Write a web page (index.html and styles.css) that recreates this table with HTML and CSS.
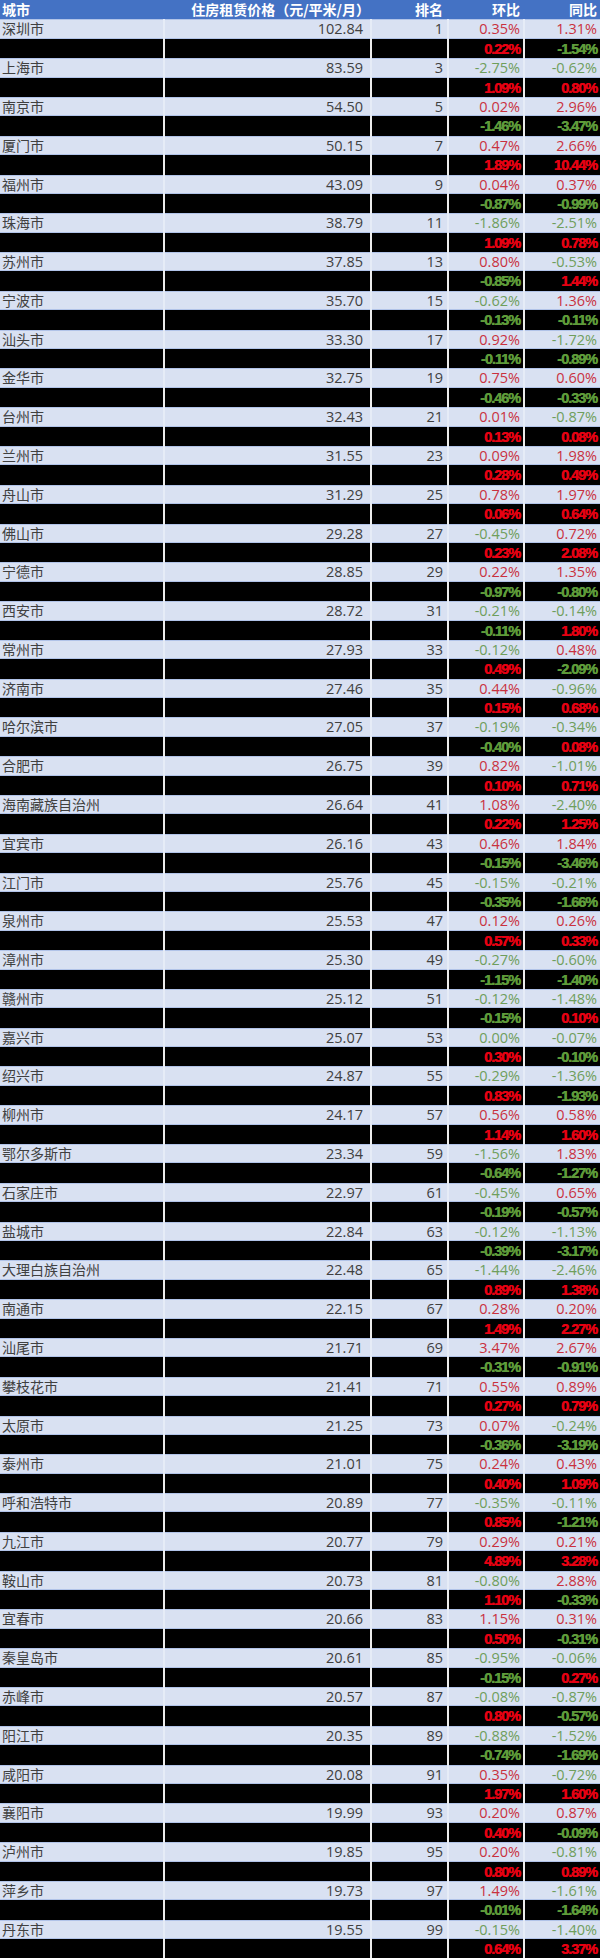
FILE: index.html
```html
<!DOCTYPE html>
<html lang="zh-CN">
<head>
<meta charset="utf-8">
<title>住房租赁价格</title>
<link rel="stylesheet" href="styles.css">
</head>
<body>
<div class="table">
<div class="row head"><div class="cell city">城市</div><div class="cell price">住房租赁价格（元/平米/月）</div><div class="cell rank">排名</div><div class="cell pct">环比</div><div class="cell pct">同比</div></div>
<div class="row data"><div class="cell city">深圳市</div><div class="cell price">102.84</div><div class="cell rank">1</div><div class="cell pct r">0.35%</div><div class="cell pct r">1.31%</div></div>
<div class="row mask"><div class="cell"></div><div class="cell"></div><div class="cell"></div><div class="cell pct r">0.22%</div><div class="cell pct g">-1.54%</div></div>
<div class="row data"><div class="cell city">上海市</div><div class="cell price">83.59</div><div class="cell rank">3</div><div class="cell pct g">-2.75%</div><div class="cell pct g">-0.62%</div></div>
<div class="row mask"><div class="cell"></div><div class="cell"></div><div class="cell"></div><div class="cell pct r">1.09%</div><div class="cell pct r">0.80%</div></div>
<div class="row data"><div class="cell city">南京市</div><div class="cell price">54.50</div><div class="cell rank">5</div><div class="cell pct r">0.02%</div><div class="cell pct r">2.96%</div></div>
<div class="row mask"><div class="cell"></div><div class="cell"></div><div class="cell"></div><div class="cell pct g">-1.46%</div><div class="cell pct g">-3.47%</div></div>
<div class="row data"><div class="cell city">厦门市</div><div class="cell price">50.15</div><div class="cell rank">7</div><div class="cell pct r">0.47%</div><div class="cell pct r">2.66%</div></div>
<div class="row mask"><div class="cell"></div><div class="cell"></div><div class="cell"></div><div class="cell pct r">1.89%</div><div class="cell pct r">10.44%</div></div>
<div class="row data"><div class="cell city">福州市</div><div class="cell price">43.09</div><div class="cell rank">9</div><div class="cell pct r">0.04%</div><div class="cell pct r">0.37%</div></div>
<div class="row mask"><div class="cell"></div><div class="cell"></div><div class="cell"></div><div class="cell pct g">-0.87%</div><div class="cell pct g">-0.99%</div></div>
<div class="row data"><div class="cell city">珠海市</div><div class="cell price">38.79</div><div class="cell rank">11</div><div class="cell pct g">-1.86%</div><div class="cell pct g">-2.51%</div></div>
<div class="row mask"><div class="cell"></div><div class="cell"></div><div class="cell"></div><div class="cell pct r">1.09%</div><div class="cell pct r">0.78%</div></div>
<div class="row data"><div class="cell city">苏州市</div><div class="cell price">37.85</div><div class="cell rank">13</div><div class="cell pct r">0.80%</div><div class="cell pct g">-0.53%</div></div>
<div class="row mask"><div class="cell"></div><div class="cell"></div><div class="cell"></div><div class="cell pct g">-0.85%</div><div class="cell pct r">1.44%</div></div>
<div class="row data"><div class="cell city">宁波市</div><div class="cell price">35.70</div><div class="cell rank">15</div><div class="cell pct g">-0.62%</div><div class="cell pct r">1.36%</div></div>
<div class="row mask"><div class="cell"></div><div class="cell"></div><div class="cell"></div><div class="cell pct g">-0.13%</div><div class="cell pct g">-0.11%</div></div>
<div class="row data"><div class="cell city">汕头市</div><div class="cell price">33.30</div><div class="cell rank">17</div><div class="cell pct r">0.92%</div><div class="cell pct g">-1.72%</div></div>
<div class="row mask"><div class="cell"></div><div class="cell"></div><div class="cell"></div><div class="cell pct g">-0.11%</div><div class="cell pct g">-0.89%</div></div>
<div class="row data"><div class="cell city">金华市</div><div class="cell price">32.75</div><div class="cell rank">19</div><div class="cell pct r">0.75%</div><div class="cell pct r">0.60%</div></div>
<div class="row mask"><div class="cell"></div><div class="cell"></div><div class="cell"></div><div class="cell pct g">-0.46%</div><div class="cell pct g">-0.33%</div></div>
<div class="row data"><div class="cell city">台州市</div><div class="cell price">32.43</div><div class="cell rank">21</div><div class="cell pct r">0.01%</div><div class="cell pct g">-0.87%</div></div>
<div class="row mask"><div class="cell"></div><div class="cell"></div><div class="cell"></div><div class="cell pct r">0.13%</div><div class="cell pct r">0.08%</div></div>
<div class="row data"><div class="cell city">兰州市</div><div class="cell price">31.55</div><div class="cell rank">23</div><div class="cell pct r">0.09%</div><div class="cell pct r">1.98%</div></div>
<div class="row mask"><div class="cell"></div><div class="cell"></div><div class="cell"></div><div class="cell pct r">0.28%</div><div class="cell pct r">0.49%</div></div>
<div class="row data"><div class="cell city">舟山市</div><div class="cell price">31.29</div><div class="cell rank">25</div><div class="cell pct r">0.78%</div><div class="cell pct r">1.97%</div></div>
<div class="row mask"><div class="cell"></div><div class="cell"></div><div class="cell"></div><div class="cell pct r">0.06%</div><div class="cell pct r">0.64%</div></div>
<div class="row data"><div class="cell city">佛山市</div><div class="cell price">29.28</div><div class="cell rank">27</div><div class="cell pct g">-0.45%</div><div class="cell pct r">0.72%</div></div>
<div class="row mask"><div class="cell"></div><div class="cell"></div><div class="cell"></div><div class="cell pct r">0.23%</div><div class="cell pct r">2.08%</div></div>
<div class="row data"><div class="cell city">宁德市</div><div class="cell price">28.85</div><div class="cell rank">29</div><div class="cell pct r">0.22%</div><div class="cell pct r">1.35%</div></div>
<div class="row mask"><div class="cell"></div><div class="cell"></div><div class="cell"></div><div class="cell pct g">-0.97%</div><div class="cell pct g">-0.80%</div></div>
<div class="row data"><div class="cell city">西安市</div><div class="cell price">28.72</div><div class="cell rank">31</div><div class="cell pct g">-0.21%</div><div class="cell pct g">-0.14%</div></div>
<div class="row mask"><div class="cell"></div><div class="cell"></div><div class="cell"></div><div class="cell pct g">-0.11%</div><div class="cell pct r">1.80%</div></div>
<div class="row data"><div class="cell city">常州市</div><div class="cell price">27.93</div><div class="cell rank">33</div><div class="cell pct g">-0.12%</div><div class="cell pct r">0.48%</div></div>
<div class="row mask"><div class="cell"></div><div class="cell"></div><div class="cell"></div><div class="cell pct r">0.49%</div><div class="cell pct g">-2.09%</div></div>
<div class="row data"><div class="cell city">济南市</div><div class="cell price">27.46</div><div class="cell rank">35</div><div class="cell pct r">0.44%</div><div class="cell pct g">-0.96%</div></div>
<div class="row mask"><div class="cell"></div><div class="cell"></div><div class="cell"></div><div class="cell pct r">0.15%</div><div class="cell pct r">0.68%</div></div>
<div class="row data"><div class="cell city">哈尔滨市</div><div class="cell price">27.05</div><div class="cell rank">37</div><div class="cell pct g">-0.19%</div><div class="cell pct g">-0.34%</div></div>
<div class="row mask"><div class="cell"></div><div class="cell"></div><div class="cell"></div><div class="cell pct g">-0.40%</div><div class="cell pct r">0.08%</div></div>
<div class="row data"><div class="cell city">合肥市</div><div class="cell price">26.75</div><div class="cell rank">39</div><div class="cell pct r">0.82%</div><div class="cell pct g">-1.01%</div></div>
<div class="row mask"><div class="cell"></div><div class="cell"></div><div class="cell"></div><div class="cell pct r">0.10%</div><div class="cell pct r">0.71%</div></div>
<div class="row data"><div class="cell city">海南藏族自治州</div><div class="cell price">26.64</div><div class="cell rank">41</div><div class="cell pct r">1.08%</div><div class="cell pct g">-2.40%</div></div>
<div class="row mask"><div class="cell"></div><div class="cell"></div><div class="cell"></div><div class="cell pct r">0.22%</div><div class="cell pct r">1.25%</div></div>
<div class="row data"><div class="cell city">宜宾市</div><div class="cell price">26.16</div><div class="cell rank">43</div><div class="cell pct r">0.46%</div><div class="cell pct r">1.84%</div></div>
<div class="row mask"><div class="cell"></div><div class="cell"></div><div class="cell"></div><div class="cell pct g">-0.15%</div><div class="cell pct g">-3.46%</div></div>
<div class="row data"><div class="cell city">江门市</div><div class="cell price">25.76</div><div class="cell rank">45</div><div class="cell pct g">-0.15%</div><div class="cell pct g">-0.21%</div></div>
<div class="row mask"><div class="cell"></div><div class="cell"></div><div class="cell"></div><div class="cell pct g">-0.35%</div><div class="cell pct g">-1.66%</div></div>
<div class="row data"><div class="cell city">泉州市</div><div class="cell price">25.53</div><div class="cell rank">47</div><div class="cell pct r">0.12%</div><div class="cell pct r">0.26%</div></div>
<div class="row mask"><div class="cell"></div><div class="cell"></div><div class="cell"></div><div class="cell pct r">0.57%</div><div class="cell pct r">0.33%</div></div>
<div class="row data"><div class="cell city">漳州市</div><div class="cell price">25.30</div><div class="cell rank">49</div><div class="cell pct g">-0.27%</div><div class="cell pct g">-0.60%</div></div>
<div class="row mask"><div class="cell"></div><div class="cell"></div><div class="cell"></div><div class="cell pct g">-1.15%</div><div class="cell pct g">-1.40%</div></div>
<div class="row data"><div class="cell city">赣州市</div><div class="cell price">25.12</div><div class="cell rank">51</div><div class="cell pct g">-0.12%</div><div class="cell pct g">-1.48%</div></div>
<div class="row mask"><div class="cell"></div><div class="cell"></div><div class="cell"></div><div class="cell pct g">-0.15%</div><div class="cell pct r">0.10%</div></div>
<div class="row data"><div class="cell city">嘉兴市</div><div class="cell price">25.07</div><div class="cell rank">53</div><div class="cell pct g">0.00%</div><div class="cell pct g">-0.07%</div></div>
<div class="row mask"><div class="cell"></div><div class="cell"></div><div class="cell"></div><div class="cell pct r">0.30%</div><div class="cell pct g">-0.10%</div></div>
<div class="row data"><div class="cell city">绍兴市</div><div class="cell price">24.87</div><div class="cell rank">55</div><div class="cell pct g">-0.29%</div><div class="cell pct g">-1.36%</div></div>
<div class="row mask"><div class="cell"></div><div class="cell"></div><div class="cell"></div><div class="cell pct r">0.83%</div><div class="cell pct g">-1.93%</div></div>
<div class="row data"><div class="cell city">柳州市</div><div class="cell price">24.17</div><div class="cell rank">57</div><div class="cell pct r">0.56%</div><div class="cell pct r">0.58%</div></div>
<div class="row mask"><div class="cell"></div><div class="cell"></div><div class="cell"></div><div class="cell pct r">1.14%</div><div class="cell pct r">1.60%</div></div>
<div class="row data"><div class="cell city">鄂尔多斯市</div><div class="cell price">23.34</div><div class="cell rank">59</div><div class="cell pct g">-1.56%</div><div class="cell pct r">1.83%</div></div>
<div class="row mask"><div class="cell"></div><div class="cell"></div><div class="cell"></div><div class="cell pct g">-0.64%</div><div class="cell pct g">-1.27%</div></div>
<div class="row data"><div class="cell city">石家庄市</div><div class="cell price">22.97</div><div class="cell rank">61</div><div class="cell pct g">-0.45%</div><div class="cell pct r">0.65%</div></div>
<div class="row mask"><div class="cell"></div><div class="cell"></div><div class="cell"></div><div class="cell pct g">-0.19%</div><div class="cell pct g">-0.57%</div></div>
<div class="row data"><div class="cell city">盐城市</div><div class="cell price">22.84</div><div class="cell rank">63</div><div class="cell pct g">-0.12%</div><div class="cell pct g">-1.13%</div></div>
<div class="row mask"><div class="cell"></div><div class="cell"></div><div class="cell"></div><div class="cell pct g">-0.39%</div><div class="cell pct g">-3.17%</div></div>
<div class="row data"><div class="cell city">大理白族自治州</div><div class="cell price">22.48</div><div class="cell rank">65</div><div class="cell pct g">-1.44%</div><div class="cell pct g">-2.46%</div></div>
<div class="row mask"><div class="cell"></div><div class="cell"></div><div class="cell"></div><div class="cell pct r">0.89%</div><div class="cell pct r">1.38%</div></div>
<div class="row data"><div class="cell city">南通市</div><div class="cell price">22.15</div><div class="cell rank">67</div><div class="cell pct r">0.28%</div><div class="cell pct r">0.20%</div></div>
<div class="row mask"><div class="cell"></div><div class="cell"></div><div class="cell"></div><div class="cell pct r">1.49%</div><div class="cell pct r">2.27%</div></div>
<div class="row data"><div class="cell city">汕尾市</div><div class="cell price">21.71</div><div class="cell rank">69</div><div class="cell pct r">3.47%</div><div class="cell pct r">2.67%</div></div>
<div class="row mask"><div class="cell"></div><div class="cell"></div><div class="cell"></div><div class="cell pct g">-0.31%</div><div class="cell pct g">-0.91%</div></div>
<div class="row data"><div class="cell city">攀枝花市</div><div class="cell price">21.41</div><div class="cell rank">71</div><div class="cell pct r">0.55%</div><div class="cell pct r">0.89%</div></div>
<div class="row mask"><div class="cell"></div><div class="cell"></div><div class="cell"></div><div class="cell pct r">0.27%</div><div class="cell pct r">0.79%</div></div>
<div class="row data"><div class="cell city">太原市</div><div class="cell price">21.25</div><div class="cell rank">73</div><div class="cell pct r">0.07%</div><div class="cell pct g">-0.24%</div></div>
<div class="row mask"><div class="cell"></div><div class="cell"></div><div class="cell"></div><div class="cell pct g">-0.36%</div><div class="cell pct g">-3.19%</div></div>
<div class="row data"><div class="cell city">泰州市</div><div class="cell price">21.01</div><div class="cell rank">75</div><div class="cell pct r">0.24%</div><div class="cell pct r">0.43%</div></div>
<div class="row mask"><div class="cell"></div><div class="cell"></div><div class="cell"></div><div class="cell pct r">0.40%</div><div class="cell pct r">1.09%</div></div>
<div class="row data"><div class="cell city">呼和浩特市</div><div class="cell price">20.89</div><div class="cell rank">77</div><div class="cell pct g">-0.35%</div><div class="cell pct g">-0.11%</div></div>
<div class="row mask"><div class="cell"></div><div class="cell"></div><div class="cell"></div><div class="cell pct r">0.85%</div><div class="cell pct g">-1.21%</div></div>
<div class="row data"><div class="cell city">九江市</div><div class="cell price">20.77</div><div class="cell rank">79</div><div class="cell pct r">0.29%</div><div class="cell pct r">0.21%</div></div>
<div class="row mask"><div class="cell"></div><div class="cell"></div><div class="cell"></div><div class="cell pct r">4.89%</div><div class="cell pct r">3.28%</div></div>
<div class="row data"><div class="cell city">鞍山市</div><div class="cell price">20.73</div><div class="cell rank">81</div><div class="cell pct g">-0.80%</div><div class="cell pct r">2.88%</div></div>
<div class="row mask"><div class="cell"></div><div class="cell"></div><div class="cell"></div><div class="cell pct r">1.10%</div><div class="cell pct g">-0.33%</div></div>
<div class="row data"><div class="cell city">宜春市</div><div class="cell price">20.66</div><div class="cell rank">83</div><div class="cell pct r">1.15%</div><div class="cell pct r">0.31%</div></div>
<div class="row mask"><div class="cell"></div><div class="cell"></div><div class="cell"></div><div class="cell pct r">0.50%</div><div class="cell pct g">-0.31%</div></div>
<div class="row data"><div class="cell city">秦皇岛市</div><div class="cell price">20.61</div><div class="cell rank">85</div><div class="cell pct g">-0.95%</div><div class="cell pct g">-0.06%</div></div>
<div class="row mask"><div class="cell"></div><div class="cell"></div><div class="cell"></div><div class="cell pct g">-0.15%</div><div class="cell pct r">0.27%</div></div>
<div class="row data"><div class="cell city">赤峰市</div><div class="cell price">20.57</div><div class="cell rank">87</div><div class="cell pct g">-0.08%</div><div class="cell pct g">-0.87%</div></div>
<div class="row mask"><div class="cell"></div><div class="cell"></div><div class="cell"></div><div class="cell pct r">0.80%</div><div class="cell pct g">-0.57%</div></div>
<div class="row data"><div class="cell city">阳江市</div><div class="cell price">20.35</div><div class="cell rank">89</div><div class="cell pct g">-0.88%</div><div class="cell pct g">-1.52%</div></div>
<div class="row mask"><div class="cell"></div><div class="cell"></div><div class="cell"></div><div class="cell pct g">-0.74%</div><div class="cell pct g">-1.69%</div></div>
<div class="row data"><div class="cell city">咸阳市</div><div class="cell price">20.08</div><div class="cell rank">91</div><div class="cell pct r">0.35%</div><div class="cell pct g">-0.72%</div></div>
<div class="row mask"><div class="cell"></div><div class="cell"></div><div class="cell"></div><div class="cell pct r">1.97%</div><div class="cell pct r">1.60%</div></div>
<div class="row data"><div class="cell city">襄阳市</div><div class="cell price">19.99</div><div class="cell rank">93</div><div class="cell pct r">0.20%</div><div class="cell pct r">0.87%</div></div>
<div class="row mask"><div class="cell"></div><div class="cell"></div><div class="cell"></div><div class="cell pct r">0.40%</div><div class="cell pct g">-0.09%</div></div>
<div class="row data"><div class="cell city">泸州市</div><div class="cell price">19.85</div><div class="cell rank">95</div><div class="cell pct r">0.20%</div><div class="cell pct g">-0.81%</div></div>
<div class="row mask"><div class="cell"></div><div class="cell"></div><div class="cell"></div><div class="cell pct r">0.80%</div><div class="cell pct r">0.89%</div></div>
<div class="row data"><div class="cell city">萍乡市</div><div class="cell price">19.73</div><div class="cell rank">97</div><div class="cell pct r">1.49%</div><div class="cell pct g">-1.61%</div></div>
<div class="row mask"><div class="cell"></div><div class="cell"></div><div class="cell"></div><div class="cell pct g">-0.01%</div><div class="cell pct g">-1.64%</div></div>
<div class="row data"><div class="cell city">丹东市</div><div class="cell price">19.55</div><div class="cell rank">99</div><div class="cell pct g">-0.15%</div><div class="cell pct g">-1.40%</div></div>
<div class="row mask"><div class="cell"></div><div class="cell"></div><div class="cell"></div><div class="cell pct r">0.64%</div><div class="cell pct r">3.37%</div></div>
</div>
</body>
</html>
```
FILE: styles.css
```css
html, body {
  margin: 0;
  padding: 0;
  background: #ffffff;
}

body {
  font-family: "Open Sans", "Noto Sans CJK SC", sans-serif;
  font-size: 14.5px;
  color: #404040;
}

.table {
  width: 600px;
  display: flex;
  flex-direction: column;
}

.row {
  display: grid;
  grid-template-columns: 163px 205px 75px 74px 75px;
  column-gap: 2px;
  height: 19.4px;
}

.cell {
  box-sizing: border-box;
  height: 19.4px;
  line-height: 18px;
  white-space: nowrap;
  overflow: hidden;
  text-align: right;
  padding: 0 3px 0 0;
}

.cell.city {
  text-align: left;
  padding: 0 0 0 2px;
}

.cell.price {
  padding-right: 7px;
}

.cell.rank {
  padding-right: 4px;
}

.head {
  background: #4472c4;
  color: #ffffff;
  font-weight: 700;
  font-family: "Noto Sans CJK SC", sans-serif;
  font-size: 14px;
}

.head .cell {
  line-height: 18px;
}

.head .cell.price {
  padding-right: 0;
}

.data {
  background: #e6ecf7;
}

.data .cell {
  background: #d9e1f2;
  border-top: 1px solid #b1c3e8;
  border-bottom: 1px solid #b1c3e8;
  line-height: 17px;
}

.data .cell.city {
  font-family: "Noto Sans CJK SC", sans-serif;
  font-size: 14px;
}

.mask {
  background: #ececec;
}

.mask .cell {
  background: #000000;
  font-family: "Liberation Sans", "Noto Sans", sans-serif;
  font-weight: 700;
  font-size: 14.5px;
  letter-spacing: -1px;
  line-height: 21px;
}

.data .r {
  color: #c9313f;
}

.data .g {
  color: #6f9e5c;
}

.mask .r {
  color: #e60012;
  text-shadow: 0.5px 0 0 #e60012;
}

.mask .g {
  color: #5e9b3a;
  text-shadow: 0.5px 0 0 #5e9b3a;
}
```
